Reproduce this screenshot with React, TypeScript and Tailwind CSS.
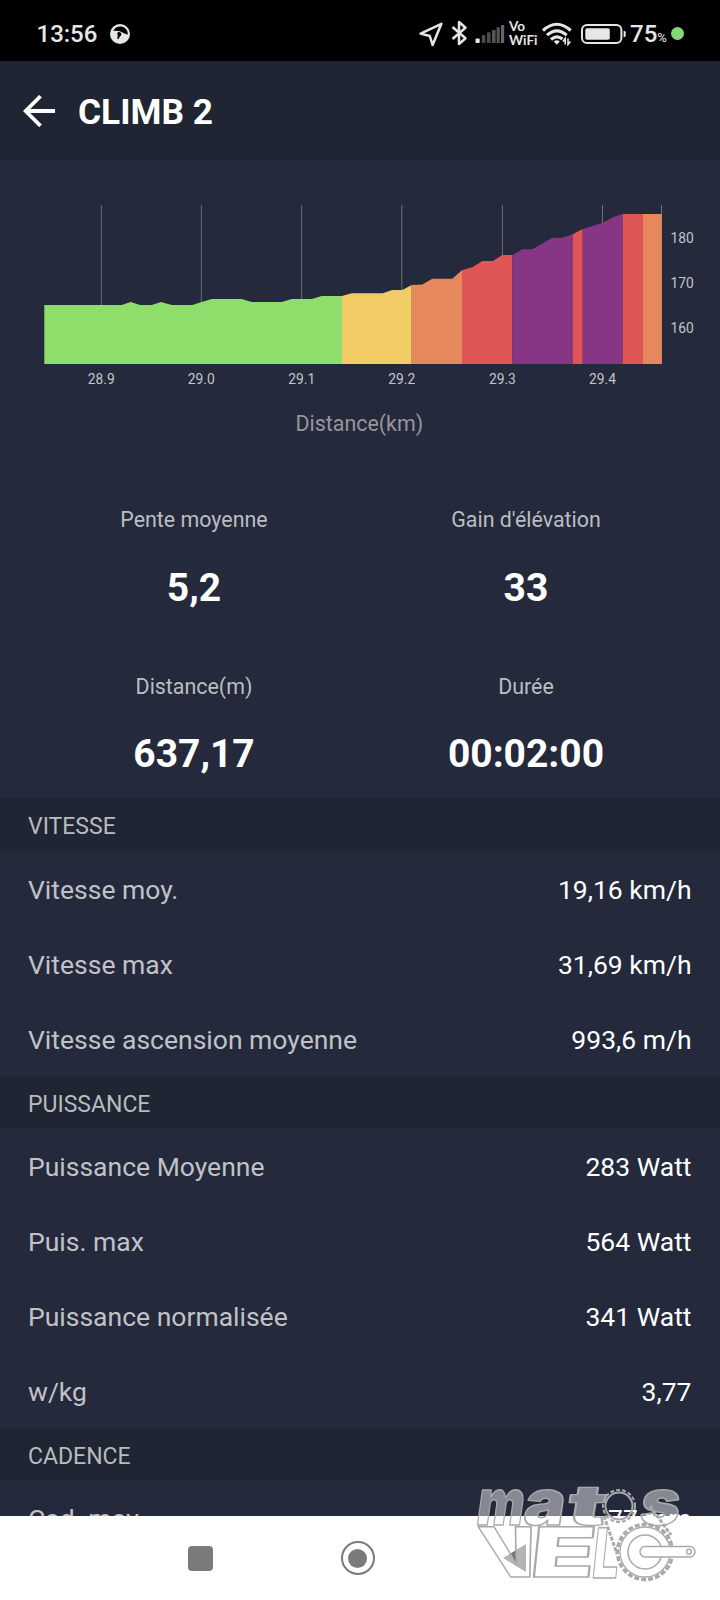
const summary = [
  { label: 'Pente moyenne', value: '5,2' },
  { label: "Gain d'élévation", value: '33' },
  { label: 'Distance(m)', value: '637,17' },
  { label: 'Durée', value: '00:02:00' },
]

const sections = [
  {
    title: 'VITESSE',
    rows: [
      ['Vitesse moy.', '19,16 km/h'],
      ['Vitesse max', '31,69 km/h'],
      ['Vitesse ascension moyenne', '993,6 m/h'],
    ],
  },
  {
    title: 'PUISSANCE',
    rows: [
      ['Puissance Moyenne', '283 Watt'],
      ['Puis. max', '564 Watt'],
      ['Puissance normalisée', '341 Watt'],
      ['w/kg', '3,77'],
    ],
  },
  {
    title: 'CADENCE',
    rows: [['Cad. moy.', '77 rpm']],
  },
]

// Each slope segment is closed down to the chart baseline (y = 204)
const segments = [
  {
    color: '#8fde6b',
    points:
      '44.3,204 44.3,145 121.7,145 130.7,142 140,145 151.7,145 161,142 171.7,145 192.3,145 201.7,142 211.7,139 241.7,139 251.7,142 281.7,142 291.7,139 311.7,139 321.7,136 342,136 342,204',
  },
  {
    color: '#f1cb63',
    points: '342,204 342,136 351.7,133.3 382.7,133.3 392.3,130 402.3,130 411.7,125 411.7,204',
  },
  {
    color: '#e5895c',
    points: '411.7,204 411.7,125 422.3,124.5 432.3,118.7 452.3,118.7 462,110.3 462,204',
  },
  {
    color: '#e05656',
    points: '462,204 462,110.3 473.3,106.7 482.3,101 492.7,101 502.3,95 512.3,95 512.3,204',
  },
  {
    color: '#863685',
    points: '512.3,204 512.3,95 522.3,89.3 532.3,89.3 552.3,77.7 562.3,77.7 572.7,74.3 572.7,204',
  },
  { color: '#e05656', points: '572.7,204 572.7,74.3 582.7,69 582.7,204' },
  { color: '#863685', points: '582.7,204 582.7,69 602.3,63 613.3,57 622.7,54 622.7,204' },
  { color: '#e05656', points: '622.7,204 622.7,54 643,54 643,204' },
  { color: '#e5895c', points: '643,204 643,54 661.8,54 661.8,204' },
]

const xTicks = [
  { x: 101.3, label: '28.9' },
  { x: 201.3, label: '29.0' },
  { x: 301.7, label: '29.1' },
  { x: 401.8, label: '29.2' },
  { x: 502.4, label: '29.3' },
  { x: 602.5, label: '29.4' },
]

const yTicks = [
  { y: 83, label: '180' },
  { y: 128, label: '170' },
  { y: 173, label: '160' },
]

function StatusBar() {
  return (
    <div className="h-[61px] shrink-0 bg-black flex items-center pt-[7px] pl-[36.5px] pr-[36px] text-[#e6e6e6]">
      <span className="text-[24px] leading-none font-medium">13:56</span>
      <svg className="ml-[13px] -mt-px" width="20" height="20" viewBox="0 0 20 20">
        <circle cx="10" cy="10" r="10" fill="#e6e6e6" />
        <path d="M3.2 6.8C5 3 9 1.7 12.4 2.7C15.7 3.7 17.8 6.4 17.9 10.6C14 9.8 10.5 5.8 3.2 6.8Z" fill="#000" />
        <path d="M7.2 9.2a2.2 2.2 0 0 1 4 1.8c-.3 1.3-2 1-2 3.6L7.2 15l.6-3.4Z" fill="#000" />
      </svg>
      <svg className="ml-auto" width="24" height="25" viewBox="0 0 24 25" fill="none">
        <path d="M22.4 1.8L1.6 11.6L10.8 14L13.6 23Z" stroke="#e6e6e6" strokeWidth="2.5" strokeLinejoin="round" />
      </svg>
      <svg className="ml-[8px] -mt-[2px]" width="17" height="26" viewBox="0 0 17 26" fill="none">
        <path
          d="M1.5 7L14.5 18.2L8 24V2L14.5 7.8L1.5 19"
          stroke="#e6e6e6"
          strokeWidth="2.5"
          strokeLinejoin="round"
        />
      </svg>
      <svg className="ml-[7px] -mt-px" width="30" height="20" viewBox="0 0 30 20">
        <rect x="0.5" y="14.5" width="4.2" height="4.5" rx="1" fill="#e6e6e6" />
        <rect x="6.8" y="11" width="3.6" height="8" rx="0.5" fill="#4b4b4b" />
        <rect x="12" y="8.3" width="3.6" height="10.7" rx="0.5" fill="#4b4b4b" />
        <rect x="17" y="6" width="3.6" height="13" rx="0.5" fill="#555" />
        <rect x="21.6" y="3.3" width="3.2" height="15.7" rx="0.5" fill="#555" />
        <rect x="26" y="1" width="3.2" height="18" rx="0.5" fill="#666" />
      </svg>
      <div className="ml-[4px] w-[28px] -mt-[3px] text-[13.5px] leading-[14px] font-bold whitespace-nowrap font-[Lato,sans-serif]">
        <div>Vo</div>
        <div>WiFi</div>
      </div>
      <svg className="ml-[5px] -mt-px" width="30" height="24" viewBox="0 0 30 24" fill="none">
        <g stroke="#e6e6e6" strokeWidth="3.1">
          <path d="M1 8.5Q14.8 -4 28.7 8.5" />
          <path d="M5 13.2Q14.8 4.6 24.7 13.2" />
          <path d="M9 17.5Q14.8 12.3 20.5 17" />
        </g>
        <path d="M11.8 19.4Q14.8 17 17.8 19.4L14.8 22.7Z" fill="#e6e6e6" />
        <path d="M23.2 22.5V16.5L21 19.4M26 16.5V22.5L28.4 19.6" stroke="#e6e6e6" strokeWidth="1.6" />
      </svg>
      <svg className="ml-[9px] -mt-px" width="46" height="20" viewBox="0 0 46 20" fill="none">
        <rect x="1" y="1" width="39.4" height="18" rx="5" stroke="#e6e6e6" strokeWidth="2" />
        <rect x="4.3" y="4.2" width="24.5" height="11.6" rx="1.8" fill="#e6e6e6" />
        <path d="M42.6 7h.8a1.3 1.3 0 0 1 1.3 1.3v3.4a1.3 1.3 0 0 1-1.3 1.3h-.8Z" fill="#e6e6e6" />
      </svg>
      <div className="ml-[3px] w-[38px] flex items-baseline leading-none">
        <span className="text-[24px] leading-none font-medium">75</span>
        <span className="text-[13px] leading-none">%</span>
      </div>
      <span className="ml-[3px] w-[13px] h-[13px] -mt-px rounded-full bg-[#83d979]" />
    </div>
  )
}

function Header() {
  return (
    <header className="h-[99px] shrink-0 bg-[#1f2532] flex items-center pl-[23px]">
      <svg width="33" height="32" viewBox="0 0 33 32" fill="none">
        <path d="M17.5 1.2L2.6 16L17.5 30.8M2.6 16H32" stroke="#fff" strokeWidth="3.8" />
      </svg>
      <h1 className="ml-[22px] mt-[4px] text-[35.3px] leading-none font-bold text-white">CLIMB 2</h1>
    </header>
  )
}

function ElevationChart() {
  return (
    <svg className="block shrink-0" width="720" height="306" viewBox="0 0 720 306">
      {xTicks.map((t) => (
        <line key={t.label} x1={t.x} x2={t.x} y1="45" y2="204" stroke="#6c6f76" />
      ))}
      <line x1="661.5" x2="661.5" y1="45" y2="204" stroke="#6c6f76" />
      {segments.map((s) => (
        <polygon key={s.points} points={s.points} fill={s.color} />
      ))}
      <g fill="#c4c5ca" fontSize="13.8">
        {xTicks.map((t) => (
          <text key={t.label} x={t.x} y="224" textAnchor="middle">
            {t.label}
          </text>
        ))}
        {yTicks.map((t) => (
          <text key={t.label} x="670.5" y={t.y}>
            {t.label}
          </text>
        ))}
      </g>
      <text x="359.3" y="271" textAnchor="middle" fill="#96979c" fontSize="21.4">
        Distance(km)
      </text>
    </svg>
  )
}

function Summary() {
  return (
    <div className="h-[332.4px] shrink-0 px-7 grid grid-cols-2 grid-rows-2 text-center">
      {summary.map((item) => (
        <div key={item.label} className="pt-[40.4px]">
          <div className="text-[21.4px] leading-[28px] text-[#bcbdc3]">{item.label}</div>
          <div className="mt-[30.6px] text-[39px] leading-[46px] font-bold text-white">{item.value}</div>
        </div>
      ))}
    </div>
  )
}

function NavigationBar() {
  return (
    <nav className="h-[84px] shrink-0 bg-white flex items-center pl-[188px]">
      <span className="w-[25px] h-[25px] rounded-[4px] bg-[#7a7a7a]" />
      <span className="ml-[127.5px] w-[34px] h-[34px] rounded-full border-[2.5px] border-[#7a7a7a] flex items-center justify-center">
        <span className="w-[19px] h-[19px] rounded-full bg-[#7a7a7a]" />
      </span>
      <svg className="ml-[128px]" width="24" height="28" viewBox="0 0 24 28">
        <path d="M0 14L23 0V28Z" fill="#777" />
      </svg>
    </nav>
  )
}

function Watermark() {
  return (
    <svg
      className="absolute left-[460px] top-[1470px]"
      width="260"
      height="130"
      viewBox="0 0 260 130"
      fontFamily="Inter"
      fontWeight="900"
    >
      <g fill="#fff" fillOpacity="0.45" stroke="#a9a9a9" strokeWidth="1.5" strokeLinejoin="round">
        <g fontSize="64">
          <text transform="translate(15 55) skewX(-8)" textLength="47" lengthAdjust="spacingAndGlyphs">m</text>
          <text transform="translate(62 55) skewX(-8)" textLength="41" lengthAdjust="spacingAndGlyphs">a</text>
          <text transform="translate(105 55) scale(1 0.87) skewX(-8)" textLength="39" lengthAdjust="spacingAndGlyphs">t</text>
          <text transform="translate(178 55) skewX(-8)" textLength="40" lengthAdjust="spacingAndGlyphs">s</text>
        </g>
        <g fontSize="69">
          <text transform="translate(32 107) skewX(17)" textLength="56" lengthAdjust="spacingAndGlyphs">V</text>
          <text transform="translate(69 107) skewX(-6)" textLength="64" lengthAdjust="spacingAndGlyphs">E</text>
          <text transform="translate(131 108) skewX(-6)" textLength="26" lengthAdjust="spacingAndGlyphs">L</text>
        </g>
      </g>
      <g fill="none" stroke="#a9a9a9">
        <circle cx="159" cy="36" r="16" strokeWidth="2" strokeDasharray="4 2" />
        <circle cx="159" cy="36" r="13.5" strokeWidth="2" />
        <path d="M144 46L157 84M190 36L211 65" strokeWidth="3" strokeDasharray="4 1.5" />
        <circle cx="185" cy="82" r="27.5" strokeWidth="3.5" strokeDasharray="5 2" />
        <circle cx="185" cy="82" r="25" strokeWidth="1.3" />
        <circle cx="185" cy="82" r="17" strokeWidth="1.5" />
        <rect x="180" y="76.5" width="55" height="10.5" rx="5.2" fill="#fff" strokeWidth="1.5" />
        <circle cx="229" cy="81.7" r="2.4" strokeWidth="1.4" />
      </g>
    </svg>
  )
}

export default function App() {
  return (
    <div className="relative w-[720px] h-[1600px] overflow-hidden flex flex-col bg-[#24293b] font-[Roboto,sans-serif]">
      <StatusBar />
      <Header />
      <main className="flex-1 min-h-0 overflow-hidden flex flex-col">
        <ElevationChart />
        <Summary />
        {sections.map((section) => (
          <section key={section.title} className="shrink-0">
            <h2 className="h-[53px] px-7 pt-[3.5px] flex items-center bg-[#1f2532] text-[23px] leading-none text-[#b9bbc0]">
              {section.title}
            </h2>
            {section.rows.map(([label, value]) => (
              <div
                key={label}
                className="h-[74.8px] pl-7 pr-[28.5px] pt-[2px] flex items-center justify-between text-[26.5px]"
              >
                <span className="text-[#c1c2c8]">{label}</span>
                <span className="text-white">{value}</span>
              </div>
            ))}
          </section>
        ))}
      </main>
      <NavigationBar />
      <Watermark />
    </div>
  )
}
